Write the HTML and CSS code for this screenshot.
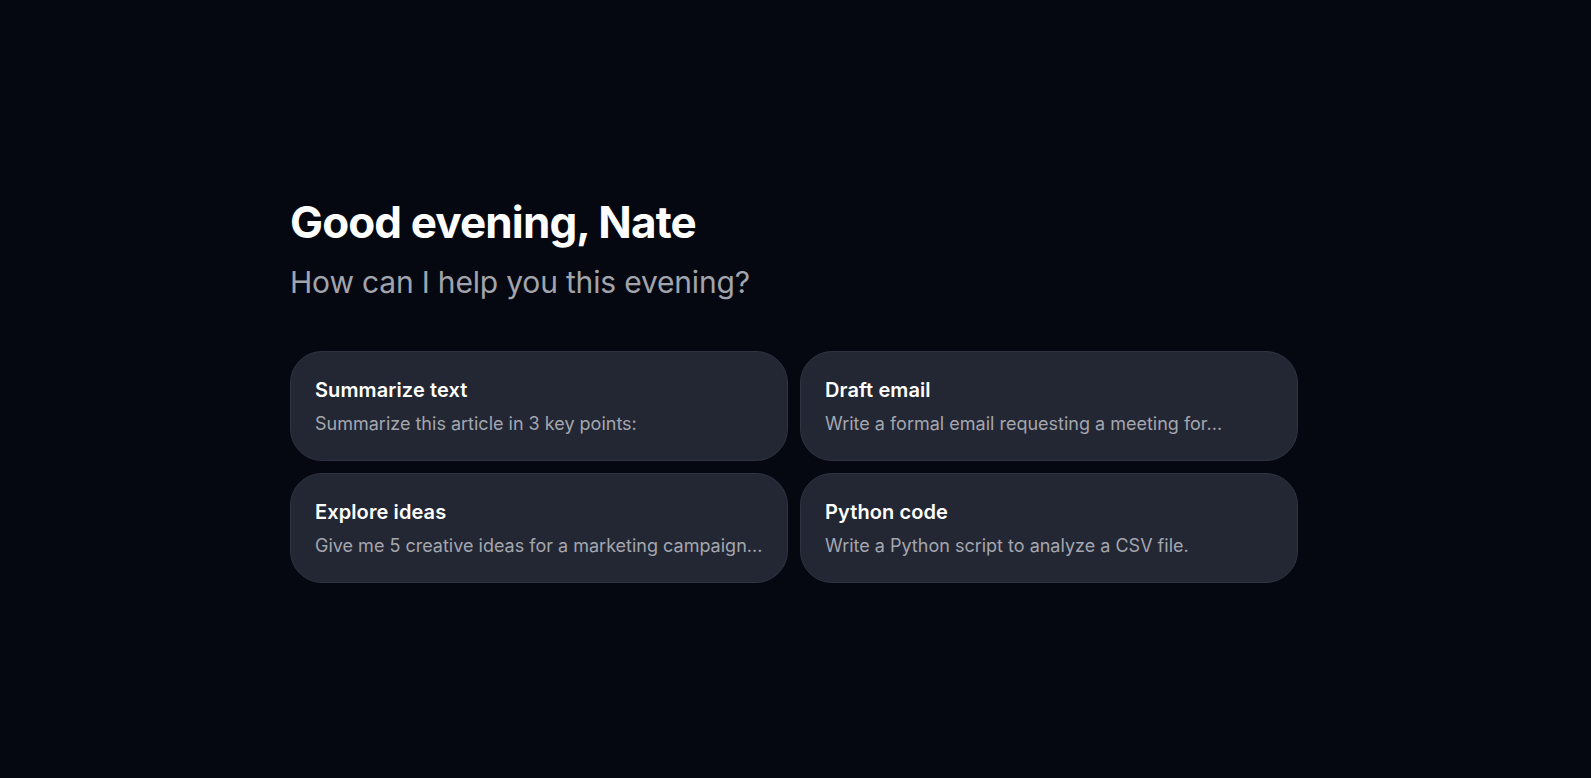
FILE: index.html
```html
<!DOCTYPE html>
<html lang="en">
<head>
<meta charset="utf-8">
<title>Good evening</title>
<link rel="stylesheet" href="styles.css">
</head>
<body>
<main class="page">
  <section class="welcome">
    <h1 class="greeting">Good evening, Nate</h1>
    <p class="subtitle">How can I help you this evening?</p>
    <div class="suggestions">
      <button class="card" type="button">
        <span class="card-title">Summarize text</span>
        <span class="card-desc">Summarize this article in 3 key points:</span>
      </button>
      <button class="card" type="button">
        <span class="card-title">Draft email</span>
        <span class="card-desc">Write a formal email requesting a meeting for...</span>
      </button>
      <button class="card" type="button">
        <span class="card-title">Explore ideas</span>
        <span class="card-desc">Give me 5 creative ideas for a marketing campaign...</span>
      </button>
      <button class="card" type="button">
        <span class="card-title">Python code</span>
        <span class="card-desc">Write a Python script to analyze a CSV file.</span>
      </button>
    </div>
  </section>
</main>
</body>
</html>
```

FILE: styles.css
```css
* { box-sizing: border-box; }
html, body { margin: 0; padding: 0; }
body {
  background: #050811;
  color: #ffffff;
  font-family: Inter, "Noto Sans", "Liberation Sans", sans-serif;
  min-height: 100vh;
}
.page {
  min-height: 100vh;
  display: flex;
  align-items: center;
  justify-content: center;
  padding-right: 3px;
}
.welcome {
  width: 1008px;
  display: flex;
  flex-direction: column;
}
.greeting {
  margin: 0;
  font-size: 44px;
  line-height: 52px;
  font-weight: 700;
  letter-spacing: -0.02em;
  color: #ffffff;
}
.subtitle {
  margin: 14px 0 0;
  font-size: 30px;
  line-height: 40px;
  font-weight: 400;
  letter-spacing: -0.006em;
  color: #a1a4ac;
}
.suggestions {
  margin-top: 49px;
  display: grid;
  grid-template-columns: 1fr 1fr;
  gap: 12px;
}
.card {
  display: flex;
  flex-direction: column;
  align-items: flex-start;
  gap: 8px;
  padding: 24px;
  background: #232734;
  border: 1px solid #2f3442;
  border-radius: 32px;
  text-align: left;
  font-family: inherit;
  cursor: pointer;
  min-width: 0;
}
.card-title {
  font-size: 20px;
  line-height: 28px;
  font-weight: 600;
  letter-spacing: 0.005em;
  color: #ffffff;
}
.card-desc {
  font-size: 18px;
  line-height: 24px;
  font-weight: 400;
  color: #a3a6ae;
  white-space: nowrap;
  overflow: hidden;
  text-overflow: ellipsis;
  max-width: 100%;
}
```
